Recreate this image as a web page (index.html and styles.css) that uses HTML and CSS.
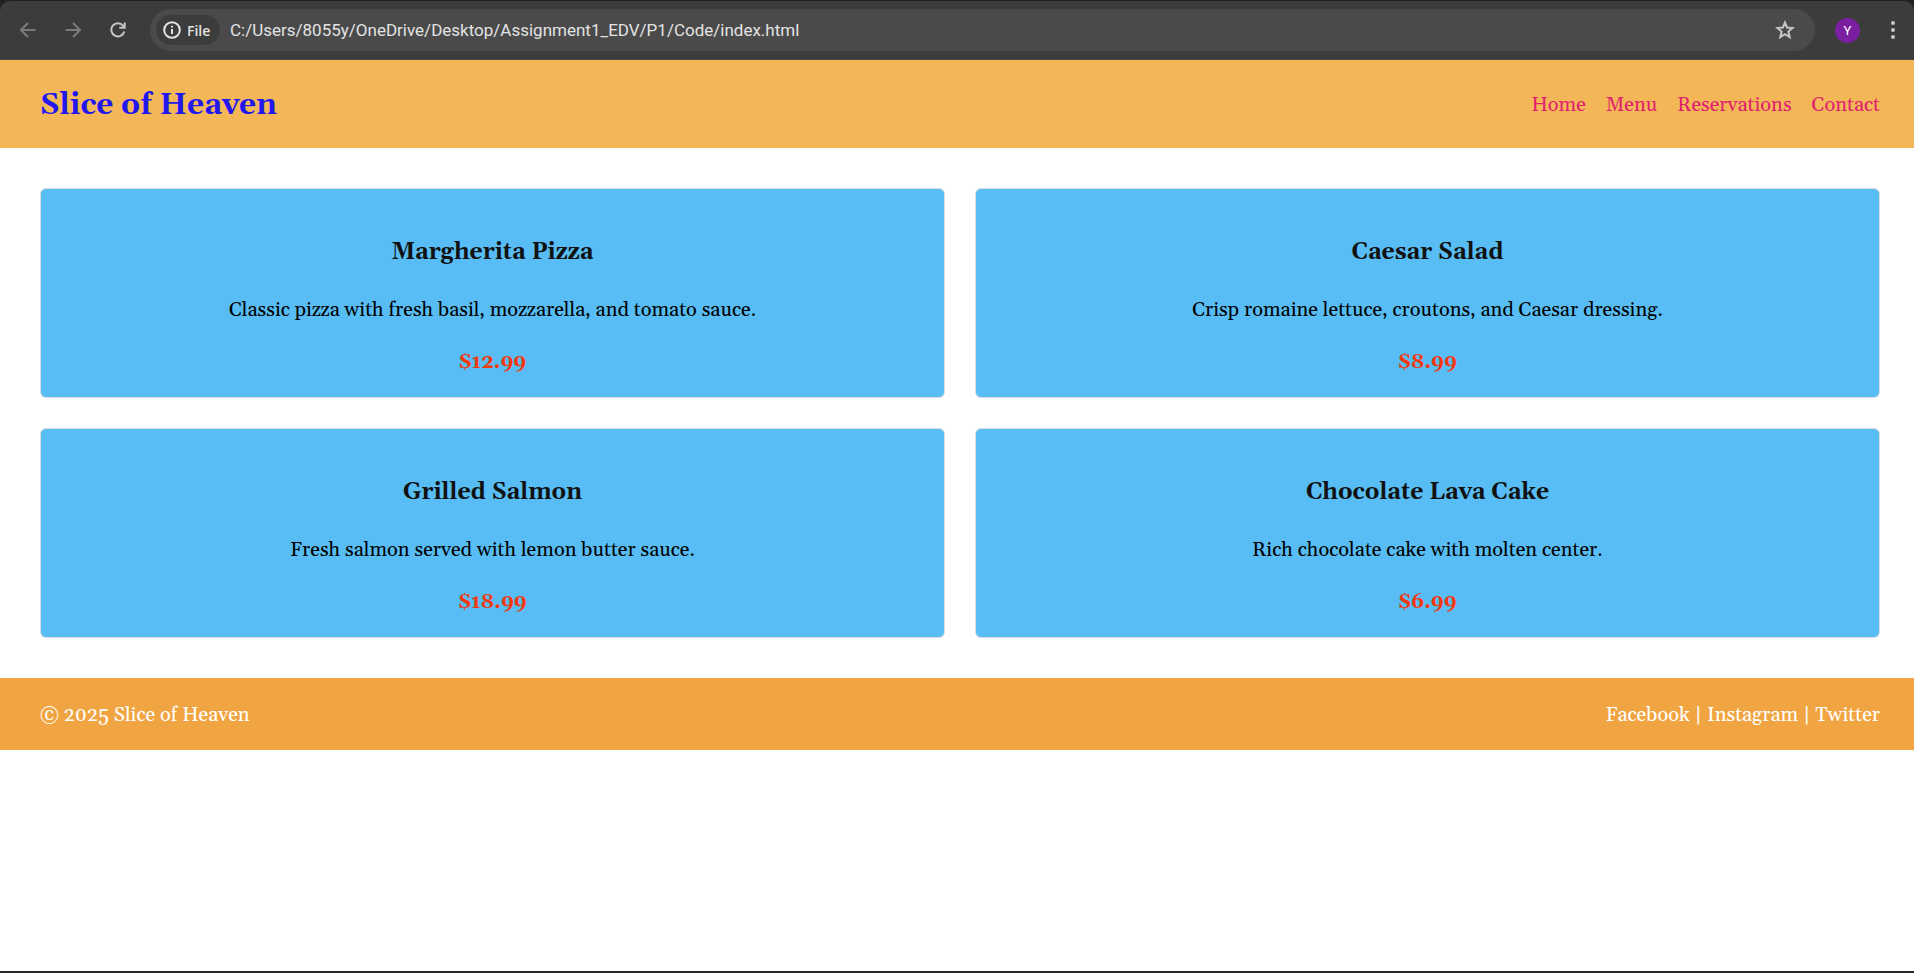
FILE: index.html
```html
<!DOCTYPE html>
<html lang="en">
<head>
<meta charset="utf-8">
<title>Slice of Heaven</title>
<link rel="stylesheet" href="styles.css">
</head>
<body>
<div class="window">
  <div class="frame">
    <div class="toolbar">
      <button class="tool tool-off" aria-label="Back"><svg width="16" height="16" viewBox="0 0 16 16"><path d="M15.5 8H1.5M8 1 1 8l7 7"/></svg></button>
      <button class="tool tool-off" aria-label="Forward"><svg width="16" height="16" viewBox="0 0 16 16"><path d="M.5 8h14M8 1l7 7-7 7"/></svg></button>
      <button class="tool" aria-label="Reload"><svg width="16" height="16" viewBox="0 0 16 16"><path d="M14.3 9.5A6.6 6.6 0 1 1 13 3.6L14.6 5.4M14.7 .5v5.2H9.3"/></svg></button>
      <div class="address">
        <button class="chip"><svg width="18" height="18" viewBox="0 0 18 18"><circle cx="9" cy="9" r="7.8"/><path d="M9 8v5M9 4.8v1.8"/></svg>File</button>
        <input class="url" type="text" aria-label="Address" value="C:/Users/8055y/OneDrive/Desktop/Assignment1_EDV/P1/Code/index.html">
        <button class="star" aria-label="Bookmark"><svg width="20" height="20" viewBox="0 0 20 20"><path d="M10 2.5l2.1 5 5.5.5-4.2 3.6 1.3 5.4-4.7-2.9L5.3 17l1.3-5.4L2.4 8l5.5-.5z"/></svg></button>
      </div>
      <button class="avatar" aria-label="Profile">Y</button>
      <button class="more" aria-label="More"><svg width="4" height="18" viewBox="0 0 4 18"><circle cx="2" cy="2" r="2"/><circle cx="2" cy="9" r="2"/><circle cx="2" cy="16" r="2"/></svg></button>
    </div>
  </div>
  <header class="site-header">
    <h1 class="logo">Slice of Heaven</h1>
    <nav class="nav">
      <a href="#">Home</a>
      <a href="#">Menu</a>
      <a href="#">Reservations</a>
      <a href="#">Contact</a>
    </nav>
  </header>
  <main class="menu">
    <article class="card">
      <h3>Margherita Pizza</h3>
      <p class="desc">Classic pizza with fresh basil, mozzarella, and tomato sauce.</p>
      <p class="price">$12.99</p>
    </article>
    <article class="card">
      <h3>Caesar Salad</h3>
      <p class="desc">Crisp romaine lettuce, croutons, and Caesar dressing.</p>
      <p class="price">$8.99</p>
    </article>
    <article class="card">
      <h3>Grilled Salmon</h3>
      <p class="desc">Fresh salmon served with lemon butter sauce.</p>
      <p class="price">$18.99</p>
    </article>
    <article class="card">
      <h3>Chocolate Lava Cake</h3>
      <p class="desc">Rich chocolate cake with molten center.</p>
      <p class="price">$6.99</p>
    </article>
  </main>
  <footer class="site-footer">
    <div>© 2025 Slice of Heaven</div>
    <div><a href="#">Facebook</a> | <a href="#">Instagram</a> | <a href="#">Twitter</a></div>
  </footer>
</div>
</body>
</html>
```
FILE: styles.css
```css
* { box-sizing: border-box; }

body {
  margin: 0;
  background: #fff;
  color: #000;
  font-family: Georgia, Gelasio, "Liberation Serif", serif;
  font-size: 20px;
  line-height: 24px;
}

.window {
  min-height: 100vh;
  border-bottom: 2px solid #2b2d25;
}

/* Browser toolbar */
.frame {
  padding-top: 1px;
  background: #202121;
}

.toolbar {
  display: flex;
  align-items: center;
  height: 59px;
  padding: 0 10px 0 5px;
  background: #3c3c3c;
  border-bottom: 1px solid #4a4a4a;
  border-radius: 10px 10px 0 0;
  font-family: "Segoe UI", Selawik, "Open Sans", "Noto Sans", sans-serif;
}

.toolbar button {
  display: flex;
  align-items: center;
  justify-content: center;
  padding: 0;
  border: 0;
  background: none;
  color: #c7c7c7;
  font-family: inherit;
}

.toolbar svg {
  fill: none;
  stroke: currentColor;
  stroke-width: 2;
}

.toolbar .tool { width: 45px; height: 45px; }
.toolbar .tool-off { color: #7b7b7b; }

.address {
  flex: 1;
  display: flex;
  align-items: center;
  height: 42px;
  margin-left: 10px;
  padding: 0 20px 0 6px;
  background: #4a4a4a;
  border-radius: 21px;
}

.toolbar .chip {
  justify-content: flex-start;
  gap: 6px;
  width: 64px;
  height: 30px;
  padding-left: 7px;
  border-radius: 15px;
  background: #3c3c3c;
  color: #e3e3e3;
  font-size: 14px;
  font-weight: 600;
}

.url {
  flex: 1;
  min-width: 0;
  height: 32px;
  margin-left: 10px;
  padding: 0;
  border: 0;
  outline: 0;
  background: none;
  color: #e3e3e3;
  font-family: Roboto, "Open Sans", sans-serif;
  font-size: 17px;
}

.toolbar .avatar {
  width: 25px;
  height: 25px;
  margin-left: 20px;
  border-radius: 50%;
  background: #7b1fa2;
  color: #fff;
  font-family: Roboto, sans-serif;
  font-size: 13px;
}

.toolbar .more { width: 22px; height: 30px; margin-left: 22px; }
.toolbar .more svg { fill: currentColor; stroke: none; }

/* Site */
.site-header,
.site-footer {
  display: flex;
  align-items: center;
  justify-content: space-between;
  padding: 25px 34px 23px 40px;
}

.site-header {
  padding-top: 27px;
  padding-bottom: 25px;
  background: #f4b757;
}

.logo {
  margin: 0;
  color: #2218ee;
  font-size: 30px;
  line-height: 36px;
}

.nav { display: flex; gap: 20px; }
.nav a { color: #e0216f; text-decoration: none; }

.menu {
  display: grid;
  grid-template-columns: 1fr 1fr;
  gap: 30px;
  padding: 40px 34px 40px 40px;
}

.card {
  padding: 50px 24px 23px;
  border: 1px solid #ddd;
  border-radius: 6px;
  background: #57bdf4;
  text-align: center;
}

.card h3 {
  margin: 0 0 31px;
  color: #111;
  font-size: 23px;
  line-height: 28px;
}

.desc { margin: 0 0 28px; }

.price {
  margin: 0;
  color: #f2380f;
  font-weight: bold;
}

.site-footer {
  background: #f1a542;
  color: #fff;
}

.site-footer a { color: inherit; text-decoration: none; }
```
